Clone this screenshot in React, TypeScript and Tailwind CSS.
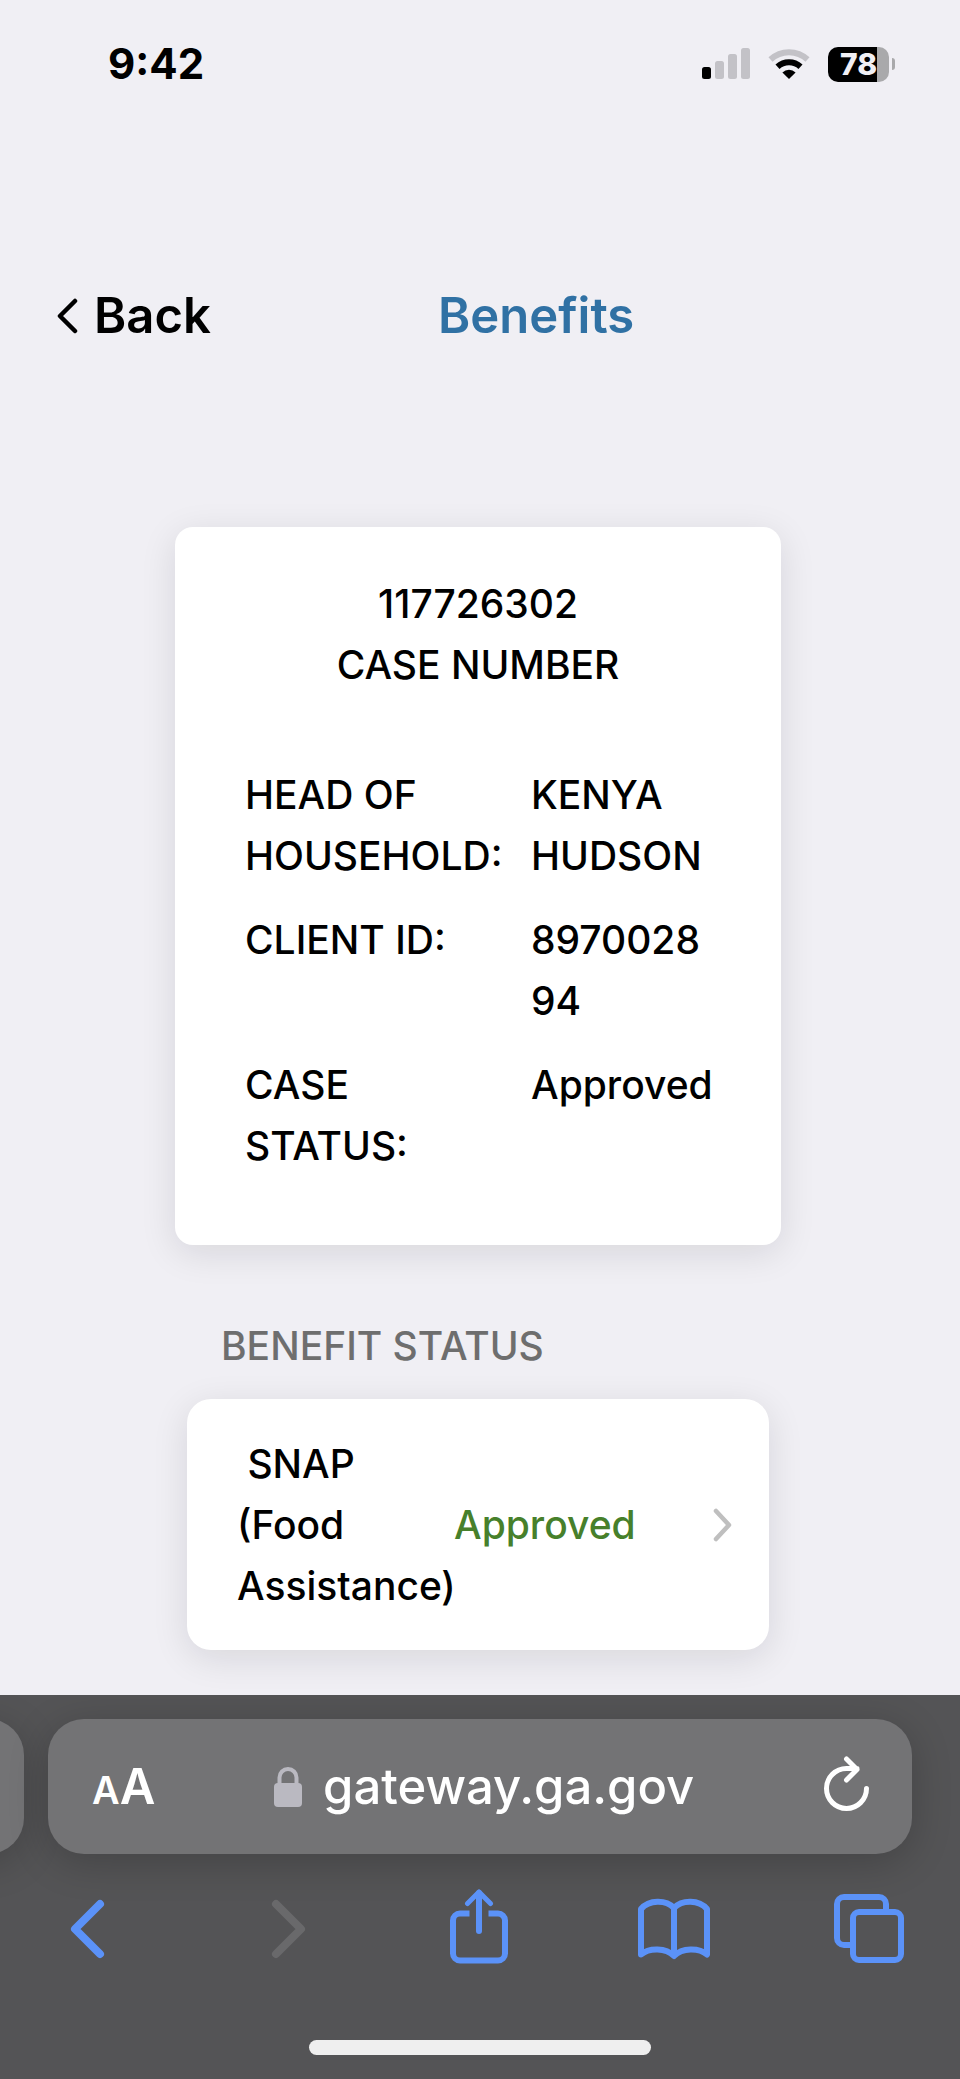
const caseDetails = [
  { label: 'HEAD OF HOUSEHOLD:', value: 'KENYA HUDSON' },
  { label: 'CLIENT ID:', value: '897002894' },
  { label: 'CASE STATUS:', value: 'Approved' }
];

const SignalIcon = () => (
  <svg width="48" height="32" viewBox="0 0 48 32" aria-hidden="true">
    <rect x="0" y="19" width="9" height="12" rx="2.5" fill="#000" />
    <rect x="13" y="13" width="9" height="18" rx="2.5" fill="#c3c2c7" />
    <rect x="26" y="6" width="9" height="25" rx="2.5" fill="#c3c2c7" />
    <rect x="39" y="0" width="9" height="31" rx="2.5" fill="#c3c2c7" />
  </svg>
);

const WifiIcon = () => (
  <svg width="42" height="32" viewBox="0 0 42 32" fill="none" aria-hidden="true">
    <path d="M2.5 11.5a27 27 0 0 1 37 0" stroke="#c3c2c7" strokeWidth="6" />
    <path d="M9.5 18.8a17 17 0 0 1 23 0" stroke="#000" strokeWidth="6" />
    <path d="M21 31l-6.600-6.600a9.500 9.500 0 0 1 13.200 0z" fill="#000" />
  </svg>
);

const Battery = () => (
  <div className="flex items-center gap-[3px]">
    <div className="flex h-[35px] w-[61px] items-center justify-center rounded-[10px] bg-linear-to-r from-black from-80% to-[#a9a9ab] to-80% text-[30px] leading-[35px] font-extrabold text-[#f0eff4]">
      78
    </div>
    <div className="h-3 w-[3px] rounded-r-full bg-[#a9a9ab]" />
  </div>
);

const StatusBar = () => (
  <div className="flex h-32 items-center justify-between pr-[65px] pl-[108px]">
    <span className="text-[42px] leading-none font-bold">9:42</span>
    <div className="flex items-center gap-[18px]">
      <SignalIcon />
      <WifiIcon />
      <Battery />
    </div>
  </div>
);

const Header = () => (
  <header className="mt-[156px] flex items-center pl-[57px] text-[49px] leading-[64px] font-semibold">
    <button type="button" className="flex w-[381px] items-center gap-4">
      <svg width="21" height="36" viewBox="0 0 21 36" fill="none" aria-hidden="true">
        <path d="M18 3L3 18l15 15" stroke="#000" strokeWidth="4.500" strokeLinecap="round" strokeLinejoin="round" />
      </svg>
      Back
    </button>
    <h1 className="text-[#3071a4]">Benefits</h1>
  </header>
);

const CaseCard = () => (
  <section className="rounded-[18px] bg-white pt-[46px] pb-[69px] shadow-[0_8px_36px_rgba(20,20,30,0.11)]">
    <div className="text-center">
      <p>117726302</p>
      <h2>CASE NUMBER</h2>
    </div>
    <dl className="mt-[69px] flex flex-col gap-[23px] pr-[60px] pl-[70px]">
      {caseDetails.map((item) => (
        <div key={item.label} className="flex">
          <dt className="w-[286px] shrink-0 pr-5">{item.label}</dt>
          <dd className="min-w-0 flex-1 wrap-anywhere">{item.value}</dd>
        </div>
      ))}
    </dl>
  </section>
);

const BenefitStatus = () => (
  <section className="mt-[70px] px-3">
    <h2 className="pl-[34px] text-[#6e6e6e]">BENEFIT STATUS</h2>
    <a
      href="#snap"
      className="mt-[23px] flex items-center rounded-3xl bg-white py-[34px] pr-[36px] pl-[50px] shadow-[0_8px_36px_rgba(20,20,30,0.11)]"
    >
      <span className="w-[217px]">
        &nbsp;SNAP
        <br />
        (Food Assistance)
      </span>
      <span className="text-[#47802b]">Approved</span>
      <svg className="ml-auto" width="20" height="34" viewBox="0 0 20 34" fill="none" aria-hidden="true">
        <path d="M3 3l13 14L3 31" stroke="#bfbfbf" strokeWidth="4.500" strokeLinecap="round" strokeLinejoin="round" />
      </svg>
    </a>
  </section>
);

const AddressBar = () => (
  <div className="flex gap-6 pr-12">
    {/* edge of the neighbouring tab */}
    <div className="-ml-24 w-[120px] rounded-[36px] bg-[#737375] shadow-[0_8px_40px_rgba(0,0,0,0.2)]" />
    <div className="flex h-[135px] flex-1 items-center justify-between rounded-[36px] bg-[#737375] pr-[42px] pl-[44px] text-white shadow-[0_8px_40px_rgba(0,0,0,0.2)]">
      <button type="button" aria-label="Page settings" className="flex items-baseline font-semibold">
        <span className="text-[38px]">A</span>
        <span className="text-[49px]">A</span>
      </button>
      <div className="flex items-center gap-5">
        <svg width="30" height="40" viewBox="0 0 30 40" fill="none" aria-hidden="true">
          <path d="M6.500 18v-7.500a8.500 8.500 0 0 1 17 0V18" stroke="#bab9c1" strokeWidth="4" />
          <rect x="1" y="16" width="28" height="24" rx="4" fill="#bab9c1" />
        </svg>
        <span className="text-[49px] leading-[64px] font-medium">gateway.ga.gov</span>
      </div>
      <button type="button" aria-label="Reload" className="flex w-[58px] justify-end">
        <svg width="46" height="62" viewBox="0 0 46 62" fill="none" aria-hidden="true">
          <path
            d="M42.500 32.500A20 20 0 1 1 22.500 12.500H33M22.500 3l10.500 10.500L22.500 24"
            stroke="#fff"
            strokeWidth="5"
            strokeLinecap="round"
            strokeLinejoin="round"
          />
        </svg>
      </button>
    </div>
  </div>
);

const toolButton = 'flex w-[74px] justify-center';

const Toolbar = () => (
  <nav className="mt-[35px] flex items-center justify-between pr-[53px] pl-[50px] text-[#5b92f8]">
    <button type="button" aria-label="Back" className={toolButton}>
      <svg width="37" height="60" viewBox="0 0 37 60" fill="none" aria-hidden="true">
        <path d="M31 5L6 30l25 25" stroke="currentColor" strokeWidth="8" strokeLinecap="round" strokeLinejoin="round" />
      </svg>
    </button>
    <button type="button" aria-label="Forward" className="flex w-[74px] justify-center pl-3 text-[#69696b]">
      <svg width="37" height="60" viewBox="0 0 37 60" fill="none" aria-hidden="true">
        <path d="M6 5l25 25L6 55" stroke="currentColor" strokeWidth="8" strokeLinecap="round" strokeLinejoin="round" />
      </svg>
    </button>
    <button type="button" aria-label="Share" className={toolButton}>
      <svg width="58" height="80" viewBox="0 0 58 80" fill="none" aria-hidden="true">
        <path d="M19.500 24.500H10a7 7 0 0 0-7 7v33a7 7 0 0 0 7 7h38a7 7 0 0 0 7-7v-33a7 7 0 0 0-7-7h-9.500" stroke="currentColor" strokeWidth="6" />
        <path d="M29 42V4" stroke="currentColor" strokeWidth="6" strokeLinecap="round" />
        <path d="M17.500 14.500L29 3l11.500 11.500" stroke="currentColor" strokeWidth="5" strokeLinecap="round" strokeLinejoin="round" />
      </svg>
    </button>
    <button type="button" aria-label="Bookmarks" className={toolButton}>
      <svg width="74" height="62" viewBox="0 0 74 62" fill="none" aria-hidden="true">
        <path
          d="M37 10C29 1.500 12 1.500 4 11v45.500c8-7 25-7 33 1.500c8-8.500 25-8.500 33-1.500V11C62 1.500 45 1.500 37 10zV57"
          stroke="currentColor"
          strokeWidth="6"
          strokeLinecap="round"
          strokeLinejoin="round"
        />
      </svg>
    </button>
    <button type="button" aria-label="Tabs" className={toolButton}>
      <svg width="72" height="70" viewBox="0 0 72 70" fill="none" aria-hidden="true">
        <path d="M19 51h-9a7 7 0 0 1-7-7V10a7 7 0 0 1 7-7h35a7 7 0 0 1 7 7v8" stroke="currentColor" strokeWidth="6" />
        <rect x="19" y="18" width="48" height="48" rx="6" stroke="currentColor" strokeWidth="6" />
      </svg>
    </button>
  </nav>
);

const App = () => {
  return (
    <div className="flex min-h-screen flex-col bg-[#f0eff4] font-['Inter',sans-serif] text-black">
      <StatusBar />
      <Header />
      <main className="mt-[179px] flex-1 pr-1 pb-11 text-[39px] leading-[61px] font-medium">
        <div className="mx-auto w-full max-w-[606px]">
          <CaseCard />
          <BenefitStatus />
        </div>
      </main>
      <footer className="overflow-hidden bg-[#545456] py-6">
        <AddressBar />
        <Toolbar />
        <div className="mx-auto mt-[71px] h-[15px] w-[342px] rounded-full bg-[#efefef]" />
      </footer>
    </div>
  );
};

export default App;
